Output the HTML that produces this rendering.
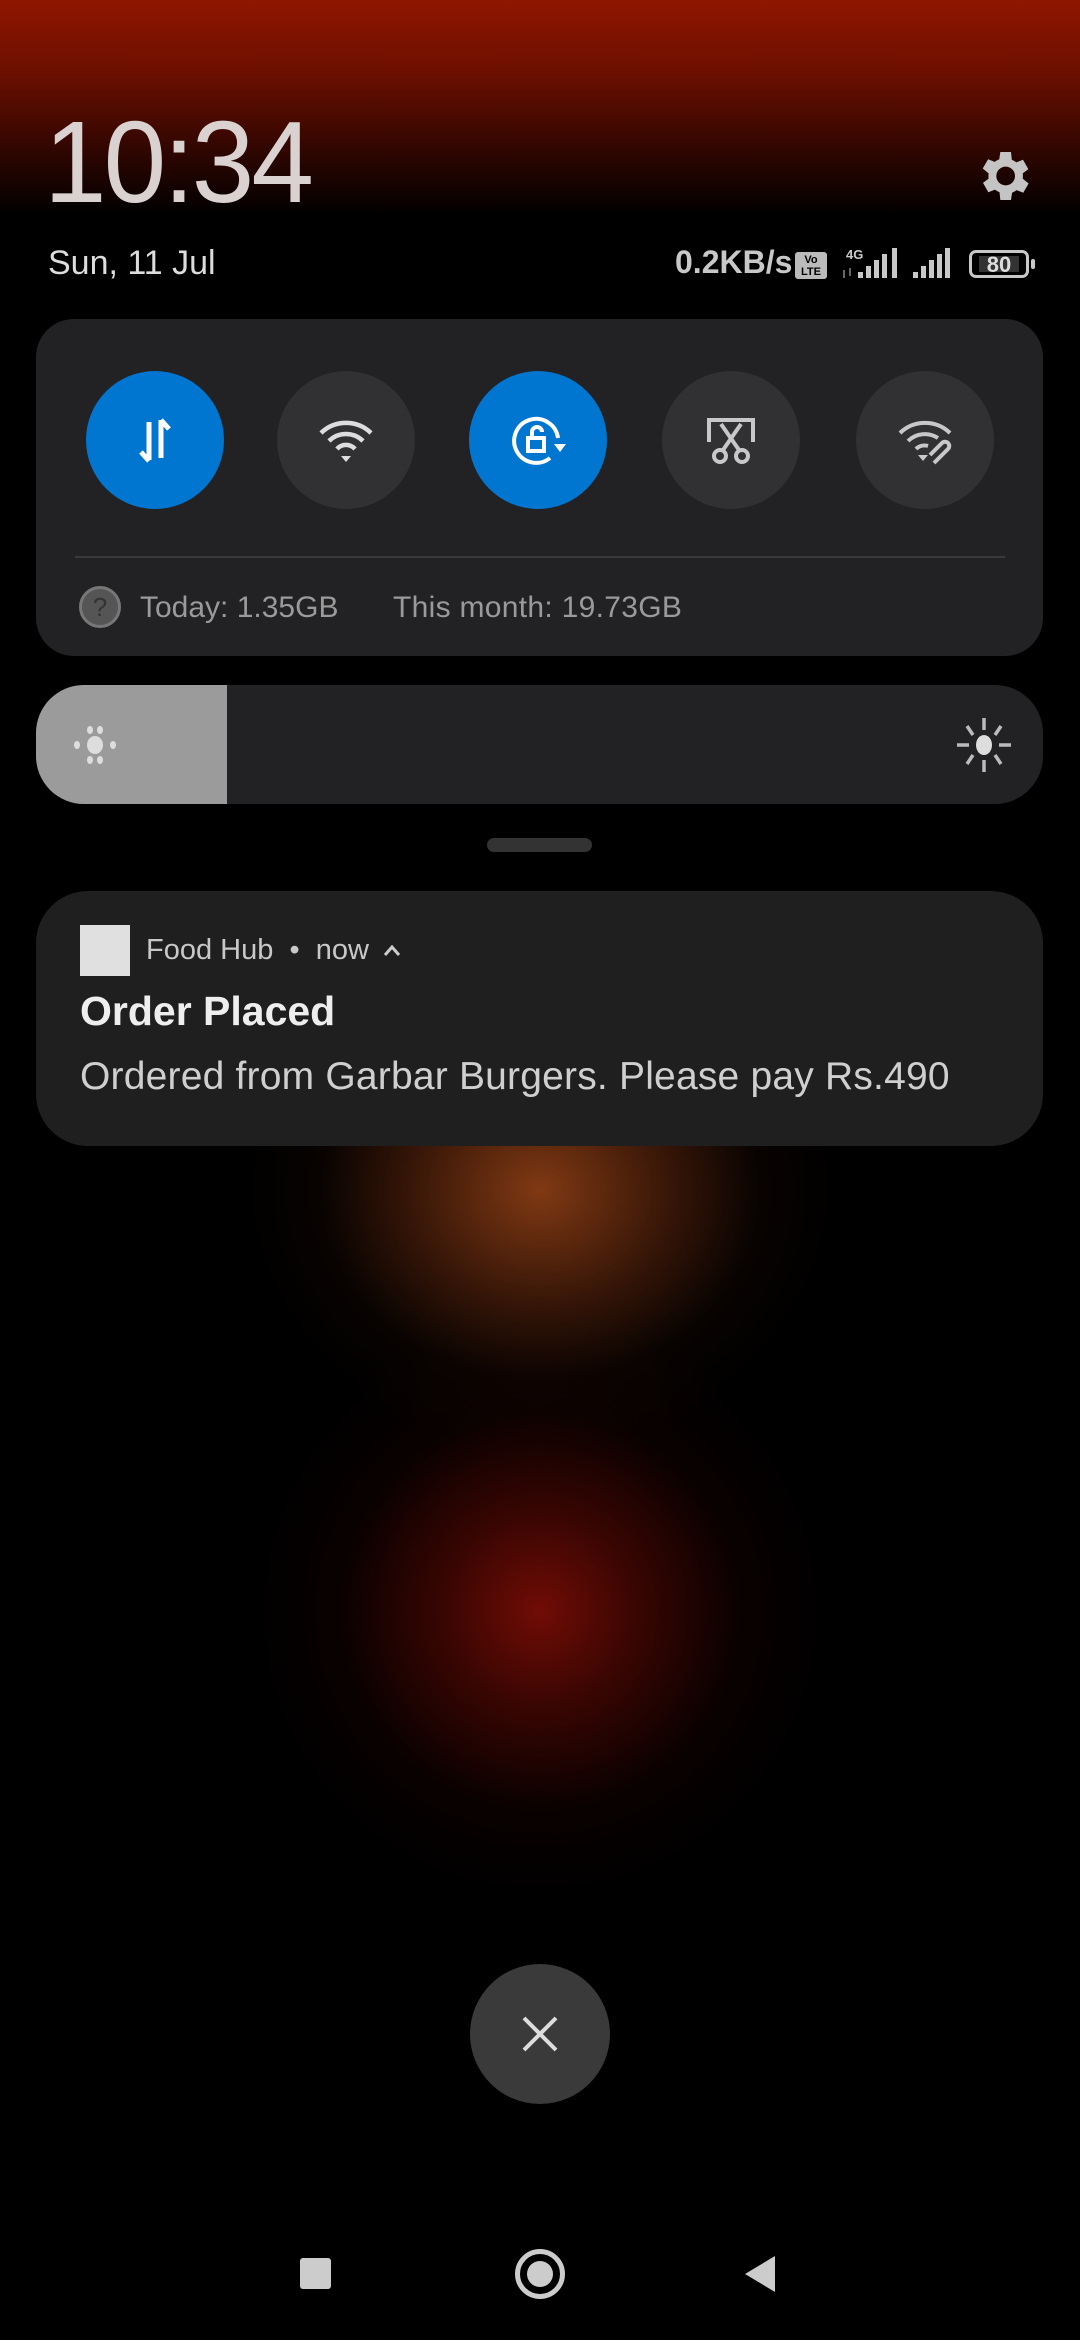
<!DOCTYPE html>
<html><head><meta charset="utf-8"><style>
*{margin:0;padding:0;box-sizing:border-box}
body{width:1080px;height:2340px;background:#000;position:relative;overflow:hidden;font-family:"Liberation Sans",sans-serif;color:#ddd}
.abs{position:absolute}
.bg{position:absolute;left:0;top:0;width:1080px;height:2340px;background:
radial-gradient(circle at 540px 1611px,rgba(125,13,6,0.9) 0,rgba(100,10,4,0.55) 100px,rgba(50,5,2,0.18) 200px,rgba(0,0,0,0) 290px),
radial-gradient(ellipse 300px 260px at 540px 1190px,rgba(135,60,20,0.95) 0,rgba(100,40,14,0.55) 130px,rgba(40,15,6,0.2) 220px,rgba(0,0,0,0) 300px),
linear-gradient(#8f1600 0,#6e1000 70px,#300600 150px,#000 215px,#000 100%)}
.btn{position:absolute;top:371px;width:138px;height:138px;border-radius:50%;background:#313133;display:flex;align-items:center;justify-content:center}
.blue{background:#0076d1}
</style></head><body>
<div class="bg"></div>
<div class="abs" style="left:44px;top:104px;font-size:116px;font-weight:300;color:#d9d2d0;letter-spacing:-3px;line-height:1;transform:scaleX(0.97);transform-origin:left">10:34</div>
<div class="abs" style="left:48px;top:246px;font-size:34px;color:#ddd;line-height:1">Sun, 11 Jul</div>
<svg class="abs" style="left:971px;top:144px" width="64" height="64" viewBox="0 0 24 24"><path fill="#c4c4c4" d="M19.4 13a7.5 7.5 0 0 0 0-2l2.1-1.6-2-3.5-2.5 1a7 7 0 0 0-1.7-1L15 3h-4l-.4 2.7a7 7 0 0 0-1.7 1l-2.5-1-2 3.5L6.6 11a7.5 7.5 0 0 0 0 2l-2.1 1.6 2 3.5 2.5-1a7 7 0 0 0 1.7 1L11 21h4l.4-2.7a7 7 0 0 0 1.7-1l2.5 1 2-3.5zM13 15.5a3.5 3.5 0 1 1 0-7 3.5 3.5 0 0 1 0 7z"/></svg>
<div class="abs" style="left:675px;top:246px;font-size:32px;font-weight:bold;color:#c8c8c8;line-height:1">0.2KB/s</div>
<div class="abs" style="left:795px;top:252px;width:32px;height:27px;background:#bbb;border-radius:3px;color:#000;font-size:11px;font-weight:bold;text-align:center;line-height:12px;padding-top:2px">Vo<br>LTE</div>
<div class="abs" style="left:846px;top:247px;font-size:13px;font-weight:bold;color:#ccc">4G</div>
<svg class="abs" style="left:840px;top:248px" width="120" height="32"><g fill="#c8c8c8"><rect x="18" y="24" width="5" height="6"/><rect x="26" y="18" width="5" height="12"/><rect x="34" y="12" width="5" height="18"/><rect x="42" y="6" width="5" height="24"/><rect x="52" y="0" width="5" height="30"/><rect x="73" y="24" width="5" height="6"/><rect x="81" y="18" width="5" height="12"/><rect x="89" y="12" width="5" height="18"/><rect x="97" y="6" width="5" height="24"/><rect x="105" y="0" width="5" height="30"/></g><path d="M4 22v8M10 20v8" stroke="#666" stroke-width="2"/></svg>
<div class="abs" style="left:969px;top:250px;width:60px;height:28px;border:3px solid #c8c8c8;border-radius:7px;padding:3px"><div style="background:#333;height:16px;width:40px;margin-left:4px;color:#ddd;font-size:22px;font-weight:bold;line-height:17px;text-align:center">80</div></div>
<div class="abs" style="left:1031px;top:259px;width:4px;height:10px;background:#c8c8c8;border-radius:2px"></div>

<div class="abs" style="left:36px;top:319px;width:1007px;height:337px;background:#222224;border-radius:38px"></div>
<div class="btn blue" style="left:86px"><svg width="60" height="60" viewBox="0 0 60 60" fill="none" stroke="#fff" stroke-width="5"><path d="M24 12v38M16 42l8 9M36 48V10M36 10l8 9"/></svg></div>
<div class="btn" style="left:277px"><svg width="62" height="62" viewBox="0 0 62 62" fill="none" stroke="#ddd" stroke-width="4.5"><path d="M6 24a36 36 0 0 1 50 0M14 32a24 24 0 0 1 34 0M22 40a12 12 0 0 1 18 0"/><path d="M26 47l5 6 5-6z" fill="#ddd" stroke="none"/></svg></div>
<div class="btn blue" style="left:469px"><svg width="64" height="64" viewBox="0 0 64 64" fill="none" stroke="#fff" stroke-width="4"><path d="M52 30a22 22 0 1 0-8 20"/><path d="M48 36l6 8 6-8z" fill="#fff" stroke="none"/><rect x="22" y="30" width="16" height="13"/><path d="M26 30v-6a5 5 0 0 1 10 0"/></svg></div>
<div class="btn" style="left:662px"><svg width="60" height="60" viewBox="0 0 60 60" fill="none" stroke="#c8c8c8" stroke-width="4"><path d="M8 32V10h44v22M20 14l18 26M40 14L22 40"/><circle cx="19" cy="46" r="6"/><circle cx="41" cy="46" r="6"/></svg></div>
<div class="btn" style="left:856px"><svg width="62" height="62" viewBox="0 0 62 62" fill="none" stroke="#c8c8c8" stroke-width="4"><path d="M6 24a36 36 0 0 1 50 0M14 32a24 24 0 0 1 30-3M22 40a12 12 0 0 1 12-3"/><path d="M24 46l5 6 5-6z" fill="#c8c8c8" stroke="none"/><path d="M40 54l14-14a4 4 0 0 0-6-6L36 46"/></svg></div>
<div class="abs" style="left:75px;top:556px;width:930px;height:2px;background:#3a3a3c"></div>
<div class="abs" style="left:79px;top:586px;width:42px;height:42px;border-radius:50%;background:#555;border:3px solid #777;color:#333;font-size:26px;text-align:center;line-height:36px">?</div>
<div class="abs" style="left:140px;top:591px;font-size:30px;color:#9a9a9a;line-height:34px">Today: 1.35GB</div>
<div class="abs" style="left:393px;top:591px;font-size:30px;color:#9a9a9a;line-height:34px;letter-spacing:0.3px">This month: 19.73GB</div>

<div class="abs" style="left:36px;top:685px;width:1007px;height:119px;background:#222224;border-radius:48px;overflow:hidden"><div style="width:191px;height:119px;background:#9b9b9b"></div></div>
<svg class="abs" style="left:70px;top:720px" width="50" height="50" viewBox="0 0 50 50" fill="#ddd"><ellipse cx="25" cy="25" rx="8" ry="9"/><ellipse cx="20" cy="10" rx="3" ry="4"/><ellipse cx="30" cy="10" rx="3" ry="4"/><ellipse cx="20" cy="40" rx="3" ry="4"/><ellipse cx="30" cy="40" rx="3" ry="4"/><ellipse cx="7" cy="25" rx="3" ry="4"/><ellipse cx="43" cy="25" rx="3" ry="4"/></svg>
<svg class="abs" style="left:955px;top:716px" width="58" height="58" viewBox="0 0 58 58" fill="none" stroke="#bbb" stroke-width="3.5"><ellipse cx="29" cy="29" rx="8" ry="10" fill="#ddd" stroke="none"/><path d="M29 2v12M29 44v12M2 29h12M44 29h12M12 10l6 9M46 10l-6 9M12 48l6-9M46 48l-6-9"/></svg>

<div class="abs" style="left:487px;top:838px;width:105px;height:14px;background:#333;border-radius:7px"></div>

<div class="abs" style="left:36px;top:891px;width:1007px;height:255px;background:#1f1f1f;border-radius:52px"></div>
<div class="abs" style="left:80px;top:925px;width:50px;height:51px;background:#e0e0e0"></div>
<div class="abs" style="left:146px;top:933px;font-size:29px;color:#c8c8c8;line-height:34px">Food Hub &nbsp;•&nbsp; now</div>
<svg class="abs" style="left:382px;top:942px" width="20" height="16"><path d="M3 13l7-8 7 8" fill="none" stroke="#ccc" stroke-width="3"/></svg>
<div class="abs" style="left:80px;top:986px;font-size:41px;font-weight:bold;color:#eee;line-height:50px">Order Placed</div>
<div class="abs" style="left:80px;top:1055px;font-size:39px;color:#cfcfcf;line-height:44px;letter-spacing:0.2px">Ordered from Garbar Burgers. Please pay Rs.490</div>

<div class="abs" style="left:470px;top:1964px;width:140px;height:140px;border-radius:50%;background:#3a3a3a"></div>
<svg class="abs" style="left:520px;top:2014px" width="40" height="40"><path d="M4 4l32 32M36 4L4 36" stroke="#ddd" stroke-width="4"/></svg>

<div class="abs" style="left:300px;top:2258px;width:31px;height:31px;background:#ccc;border-radius:3px"></div>
<div class="abs" style="left:515px;top:2249px;width:50px;height:50px;border-radius:50%;border:5px solid #ccc"><div style="margin:7px;width:26px;height:26px;border-radius:50%;background:#ccc"></div></div>
<svg class="abs" style="left:743px;top:2254px" width="34" height="40"><path d="M32 2v36L2 20z" fill="#ccc"/></svg>
</body></html>
